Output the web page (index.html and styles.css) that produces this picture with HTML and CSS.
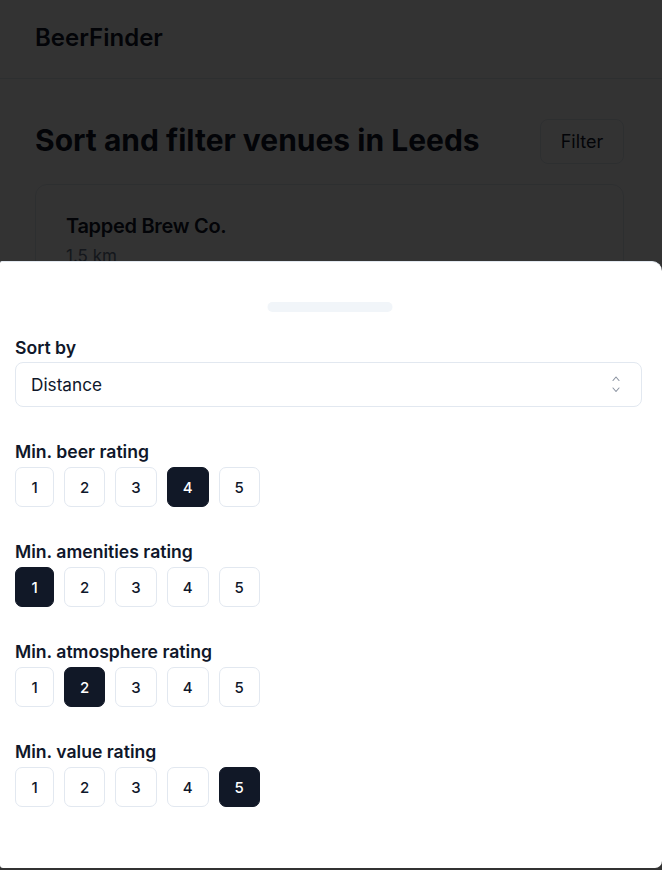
FILE: index.html
```html
<!DOCTYPE html>
<html lang="en">
<head>
<meta charset="utf-8">
<title>BeerFinder</title>
<link rel="stylesheet" href="styles.css">
</head>
<body>
<div class="page">
  <header class="site-header">
    <div class="brand">BeerFinder</div>
  </header>
  <main class="main">
    <div class="title-row">
      <h1 class="title">Sort and filter venues in Leeds</h1>
      <button class="filter-btn">Filter</button>
    </div>
    <div class="venue-card">
      <div class="venue-name">Tapped Brew Co.</div>
      <div class="venue-dist">1.5 km</div>
    </div>
  </main>
</div>

<div class="overlay"></div>

<div class="sheet">
  <div class="handle"></div>
  <div class="sheet-body">
    <section class="field">
      <div class="label label-tight">Sort by</div>
      <div class="select">
        <span>Distance</span>
        <svg class="chev" width="8" height="17" viewBox="0 0 8 17" fill="none" stroke="#8b93a1" stroke-width="1.1" stroke-linecap="round" stroke-linejoin="round">
          <polyline points="1,4.5 4,1 7,4.5"/>
          <polyline points="1,12 4,15.5 7,12"/>
        </svg>
      </div>
    </section>

    <section class="field">
      <div class="label">Min. beer rating</div>
      <div class="ratings">
        <button class="rate">1</button>
        <button class="rate">2</button>
        <button class="rate">3</button>
        <button class="rate active">4</button>
        <button class="rate">5</button>
      </div>
    </section>

    <section class="field">
      <div class="label">Min. amenities rating</div>
      <div class="ratings">
        <button class="rate active">1</button>
        <button class="rate">2</button>
        <button class="rate">3</button>
        <button class="rate">4</button>
        <button class="rate">5</button>
      </div>
    </section>

    <section class="field">
      <div class="label">Min. atmosphere rating</div>
      <div class="ratings">
        <button class="rate">1</button>
        <button class="rate active">2</button>
        <button class="rate">3</button>
        <button class="rate">4</button>
        <button class="rate">5</button>
      </div>
    </section>

    <section class="field">
      <div class="label">Min. value rating</div>
      <div class="ratings">
        <button class="rate">1</button>
        <button class="rate">2</button>
        <button class="rate">3</button>
        <button class="rate">4</button>
        <button class="rate active">5</button>
      </div>
    </section>
  </div>
</div>
</body>
</html>
```

FILE: styles.css
```css
* { box-sizing: border-box; }

html, body {
  margin: 0;
  padding: 0;
  background: #ffffff;
  font-family: Inter, "Noto Sans", sans-serif;
  color: #0f172a;
}

.page {
  min-height: 870px;
}

.site-header {
  height: 79px;
  border-bottom: 1px solid #e2e8f0;
  display: flex;
  align-items: center;
  padding: 0 35px 3px;
}

.brand {
  font-size: 24px;
  font-weight: 600;
}

.main {
  padding: 40px 38px 0 35px;
}

.title-row {
  display: flex;
  align-items: center;
  justify-content: space-between;
  height: 45px;
}

.title {
  margin: 0;
  padding-bottom: 4px;
  font-size: 30px;
  font-weight: 700;
}

.filter-btn {
  width: 84px;
  height: 45px;
  border: 1px solid #e2e8f0;
  border-radius: 8px;
  background: #fff;
  font-family: inherit;
  font-size: 18px;
  color: #0f172a;
}

.venue-card {
  margin-top: 20px;
  border: 1px solid #e2e8f0;
  border-radius: 12px;
  padding: 27px 30px;
  height: 200px;
}

.venue-name {
  font-size: 20px;
  font-weight: 600;
  line-height: 28px;
  letter-spacing: -0.3px;
}

.venue-dist {
  margin-top: 6px;
  font-size: 17px;
  color: #64748b;
}

.overlay {
  position: fixed;
  inset: 0;
  background: rgba(0, 0, 0, 0.8);
}

.sheet {
  position: fixed;
  left: 0;
  right: 0;
  top: 261px;
  bottom: 2px;
  background: #ffffff;
  border-top: 1px solid #e2e8f0;
  border-radius: 2px 10px 7px 3px;
}

.handle {
  width: 125px;
  height: 10px;
  margin: 40px auto 0;
  border-radius: 999px;
  background: #f1f5f9;
  transform: translateX(-1.5px);
}

.sheet-body {
  padding: 24px 20px 0 15px;
  display: flex;
  flex-direction: column;
  gap: 33px;
}

.field {
  display: flex;
  flex-direction: column;
  gap: 3px;
}

.label {
  font-size: 17.6px;
  font-weight: 600;
  line-height: 24px;
  color: #0f172a;
}

.label-tight {
  margin-bottom: -1px;
}

.select {
  height: 45px;
  border: 1px solid #e2e8f0;
  border-radius: 8px;
  display: flex;
  align-items: center;
  justify-content: space-between;
  padding: 0 21px 0 15px;
  font-size: 17.2px;
  color: #0f172a;
}

.chev {
  display: block;
}

.ratings {
  display: flex;
  gap: 10px;
}

.rate {
  height: 40px;
  min-width: 39px;
  padding: 0 15px;
  border: 1px solid #e2e8f0;
  border-radius: 7px;
  background: #ffffff;
  font-family: inherit;
  font-size: 15px;
  font-weight: 500;
  color: #0f172a;
}

.rate.active {
  background: #111827;
  border-color: #111827;
  color: #ffffff;
}
```
